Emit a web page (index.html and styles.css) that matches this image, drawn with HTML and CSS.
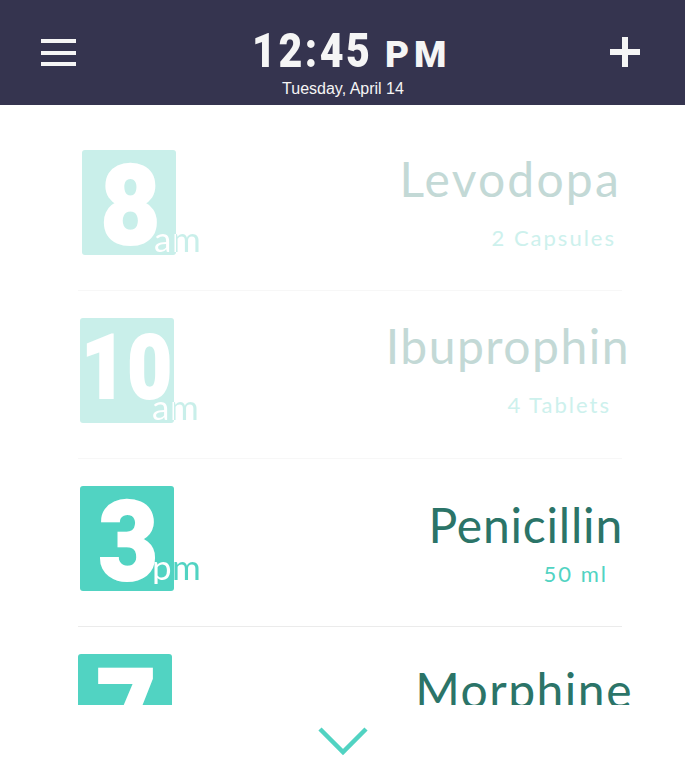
FILE: index.html
```html
<!DOCTYPE html>
<html lang="en">
<head>
<meta charset="utf-8">
<title>Medication schedule</title>
<link rel="stylesheet" href="styles.css">
</head>
<body>
<div class="app">
  <header class="topbar">
    <button class="icon-btn menu" aria-label="Menu">
      <span class="menu-line"></span>
      <span class="menu-line"></span>
      <span class="menu-line"></span>
    </button>
    <div class="clock">
      <div class="time"><span class="time-digits">12:45</span><span class="meridiem">PM</span></div>
      <div class="date">Tuesday, April 14</div>
    </div>
    <button class="icon-btn add" aria-label="Add">
      <span class="plus-h"></span>
      <span class="plus-v"></span>
    </button>
  </header>

  <main class="schedule">
    <article class="dose-row is-past row-levodopa">
      <div class="slot">
        <div class="badge"><span class="hour">8</span></div>
        <span class="period">am</span>
      </div>
      <div class="med">
        <h2 class="med-name">Levodopa</h2>
        <p class="med-amount">2 Capsules</p>
      </div>
    </article>

    <article class="dose-row is-past row-ibuprophin">
      <div class="slot">
        <div class="badge"><span class="hour two-digit">10</span></div>
        <span class="period">am</span>
      </div>
      <div class="med">
        <h2 class="med-name">Ibuprophin</h2>
        <p class="med-amount">4 Tablets</p>
      </div>
    </article>

    <article class="dose-row is-next row-penicillin">
      <div class="slot">
        <div class="badge"><span class="hour">3</span></div>
        <span class="period pm">pm</span>
      </div>
      <div class="med">
        <h2 class="med-name">Penicillin</h2>
        <p class="med-amount">50 ml</p>
      </div>
    </article>

    <article class="dose-row is-next row-morphine">
      <div class="slot">
        <div class="badge"><span class="hour">7</span></div>
        <span class="period pm">pm</span>
      </div>
      <div class="med">
        <h2 class="med-name">Morphine</h2>
        <p class="med-amount">10 mg</p>
      </div>
    </article>
  </main>

  <footer class="more">
    <svg class="chevron" width="52" height="32" viewBox="0 0 52 32" aria-hidden="true">
      <polyline points="3,5 26,28 49,5" fill="none" stroke="#51d3c2" stroke-width="4.5" stroke-linejoin="miter"/>
    </svg>
  </footer>
</div>
</body>
</html>
```

FILE: styles.css
```css
* { box-sizing: border-box; }

html, body {
  margin: 0;
  padding: 0;
  background: #ffffff;
}

.app {
  width: 685px;
  height: 771px;
  display: flex;
  flex-direction: column;
  overflow: hidden;
}

/* ---------- top bar ---------- */
.topbar {
  height: 105px;
  flex: none;
  background: #35344f;
  display: flex;
  align-items: flex-start;
  justify-content: space-between;
  padding: 0 45px 0 41px;
  color: #f5f5f5;
}

.icon-btn {
  border: 0;
  background: none;
  padding: 0;
  margin: 0;
  cursor: pointer;
}

.menu {
  width: 35px;
  margin-top: 39px;
  display: flex;
  flex-direction: column;
  gap: 7.5px;
}

.menu-line {
  display: block;
  height: 4px;
  background: #f5f5f5;
}

.add {
  position: relative;
  width: 30px;
  height: 30px;
  margin-top: 37px;
}

.plus-h,
.plus-v {
  position: absolute;
  background: #f5f5f5;
}

.plus-h { left: 0; right: 0; top: 12px; height: 6px; }
.plus-v { top: 0; bottom: 0; left: 12px; width: 6px; }

.clock {
  display: flex;
  flex-direction: column;
  align-items: center;
  padding-top: 31px;
  margin-left: 12px;
}

.time {
  font-family: "Roboto", "Liberation Sans", sans-serif;
  font-weight: 900;
  font-size: 49px;
  line-height: 40px;
  color: #f5f5f5;
  display: flex;
  align-items: baseline;
  white-space: nowrap;
}

.time-digits {
  display: inline-block;
  letter-spacing: 3px;
  transform: scaleX(0.84);
  transform-origin: left center;
  margin-right: -22px;
}

.meridiem {
  font-size: 37px;
  letter-spacing: 5px;
  margin-left: 12px;
  margin-right: -5px;
}

.date {
  font-family: "Liberation Sans", Arial, sans-serif;
  font-size: 16px;
  line-height: 1;
  color: #f5f5f5;
  margin-top: 6px;
  margin-left: -12px;
}

/* ---------- schedule list ---------- */
.schedule {
  height: 600px;
  flex: none;
  overflow: hidden;
  padding: 18px 63px 0 78px;
}

.dose-row {
  --tint: #51d3c2;
  display: flex;
  justify-content: space-between;
  align-items: flex-start;
  padding: 27px 0 35px;
  border-bottom: 1px solid #ebebeb;
}

.dose-row.is-past {
  --tint: #c9efea;
  border-bottom-color: #f7f7f7;
}

.slot {
  position: relative;
  flex: none;
  width: 94px;
  height: 105px;
}

.badge {
  width: 94px;
  height: 105px;
  border-radius: 3px;
  background: var(--tint);
  text-align: center;
}

.hour {
  display: inline-block;
  font-family: "Roboto", "Liberation Sans", sans-serif;
  font-weight: 900;
  font-size: 112px;
  line-height: 1;
  color: #ffffff;
  -webkit-text-stroke: 2px #ffffff;
  transform: scaleX(0.92);
  margin-left: 3px;
}

.hour.two-digit {
  font-size: 89px;
  padding-top: 5px;
  margin-left: -6px;
  letter-spacing: 2px;
  transform: scaleX(0.86);
}

/* "am"/"pm": white where it sits on the badge, tinted beyond it */
.period {
  position: absolute;
  left: 72px;
  bottom: -1px;
  font-family: "Lato", "Open Sans", sans-serif;
  font-size: 35px;
  line-height: 1;
  letter-spacing: 0.5px;
  color: transparent;
  background: linear-gradient(90deg, #ffffff 0 22px, var(--tint) 22px 100%);
  -webkit-background-clip: text;
  background-clip: text;
}

.period.pm { bottom: 7px; }

.med {
  display: flex;
  flex-direction: column;
  align-items: flex-end;
  font-family: "Lato", "Open Sans", sans-serif;
  white-space: nowrap;
}

.med-name {
  margin: 5px 0 0;
  font-size: 48px;
  font-weight: 400;
  line-height: 1;
  letter-spacing: 1.5px;
}

.med-amount {
  margin: 24px 0 0;
  font-size: 22px;
  line-height: 1;
  letter-spacing: 2px;
}

/* past doses are faded */
.is-past .med-name { color: #c3d9d6; }
.is-past .med-amount { color: #cdf1ed; }

/* upcoming doses */
.is-next .med-name { color: #2b7468; }
.is-next .med-amount { color: #51d3c2; }

/* per-row placement */
.row-levodopa .slot { margin-left: 4px; }
.row-levodopa .med-name { margin-right: 1px; letter-spacing: 2.2px; }
.row-levodopa .med-amount { margin-right: 6px; }

.row-ibuprophin .slot { margin-left: 2px; }
.row-ibuprophin .med-name { margin-top: 4px; margin-right: -8px; }
.row-ibuprophin .med-amount { margin-right: 11px; }

.row-penicillin .slot { margin-left: 2px; }
.row-penicillin .med-name { margin-top: 15px; margin-right: -1px; letter-spacing: 0.8px; }
.row-penicillin .med-amount { margin-top: 14px; margin-right: 14px; }

.row-morphine .med-name { margin-top: 12px; margin-right: -11px; }

/* ---------- footer ---------- */
.more {
  height: 66px;
  flex: none;
  display: flex;
  justify-content: center;
  padding-top: 19px;
  background: #ffffff;
}

.chevron { display: block; }
```
